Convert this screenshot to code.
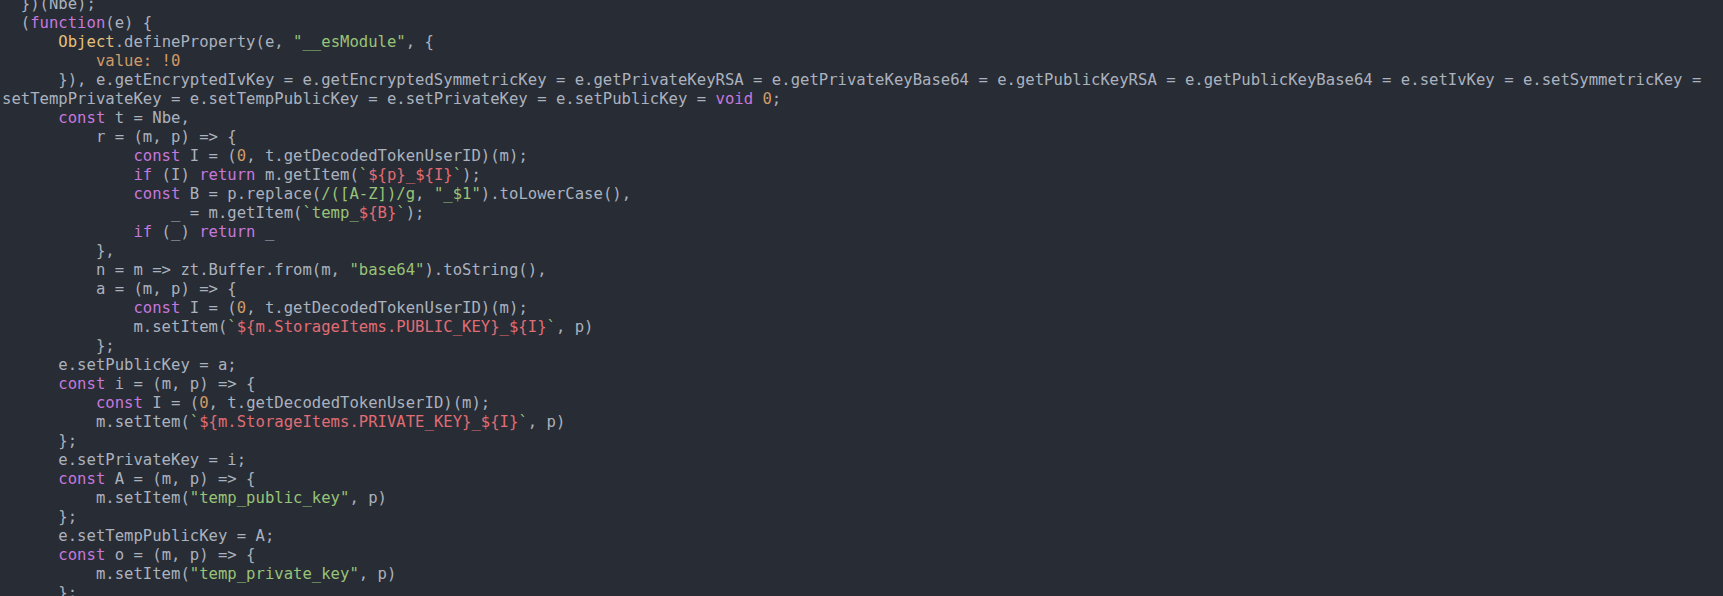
import React from 'react';

type Seg = string | [string, string];

const K = 'text-[#c678dd]';
const S = 'text-[#98c379]';
const N = 'text-[#d19a66]';
const O = 'text-[#e5c07b]';
const T = 'text-[#e06c75]';

// [indent, segments]
const lines: [number, Seg[]][] = [
  [2, ['})(Nbe);']],
  [2, ['(', [K, 'function'], '(e) {']],
  [6, [[O, 'Object'], '.defineProperty(e, ', [S, '"__esModule"'], ', {']],
  [10, [[N, 'value: !0']]],
  [
    6,
    [
      '}), e.getEncryptedIvKey = e.getEncryptedSymmetricKey = e.getPrivateKeyRSA = e.getPrivateKeyBase64 = e.getPublicKeyRSA = e.getPublicKeyBase64 = e.setIvKey = e.setSymmetricKey =',
    ],
  ],
  [0, ['setTempPrivateKey = e.setTempPublicKey = e.setPrivateKey = e.setPublicKey = ', [K, 'void'], ' ', [N, '0'], ';']],
  [6, [[K, 'const'], ' t = Nbe,']],
  [10, ['r = (m, p) => {']],
  [14, [[K, 'const'], ' I = (', [N, '0'], ', t.getDecodedTokenUserID)(m);']],
  [14, [[K, 'if'], ' (I) ', [K, 'return'], ' m.getItem(', [S, '`'], [T, '${p}_${I}'], [S, '`'], ');']],
  [14, [[K, 'const'], ' B = p.replace(', [S, '/([A-Z])/g'], ', ', [S, '"_$1"'], ').toLowerCase(),']],
  [18, ['_ = m.getItem(', [S, '`temp_'], [T, '${B}'], [S, '`'], ');']],
  [14, [[K, 'if'], ' (_) ', [K, 'return'], ' _']],
  [10, ['},']],
  [10, ['n = m => zt.Buffer.from(m, ', [S, '"base64"'], ').toString(),']],
  [10, ['a = (m, p) => {']],
  [14, [[K, 'const'], ' I = (', [N, '0'], ', t.getDecodedTokenUserID)(m);']],
  [14, ['m.setItem(', [S, '`'], [T, '${m.StorageItems.PUBLIC_KEY}_${I}'], [S, '`'], ', p)']],
  [10, ['};']],
  [6, ['e.setPublicKey = a;']],
  [6, [[K, 'const'], ' i = (m, p) => {']],
  [10, [[K, 'const'], ' I = (', [N, '0'], ', t.getDecodedTokenUserID)(m);']],
  [10, ['m.setItem(', [S, '`'], [T, '${m.StorageItems.PRIVATE_KEY}_${I}'], [S, '`'], ', p)']],
  [6, ['};']],
  [6, ['e.setPrivateKey = i;']],
  [6, [[K, 'const'], ' A = (m, p) => {']],
  [10, ['m.setItem(', [S, '"temp_public_key"'], ', p)']],
  [6, ['};']],
  [6, ['e.setTempPublicKey = A;']],
  [6, [[K, 'const'], ' o = (m, p) => {']],
  [10, ['m.setItem(', [S, '"temp_private_key"'], ', p)']],
  [6, ['};']],
];

const App = () => {
  return (
    <div className="w-full h-[596px] overflow-hidden bg-[#282c34]">
      <pre
        className="-mt-[5px] pl-[2px] text-[15.6px] leading-[19px] text-[#abb2bf] whitespace-pre"
        style={{ fontFamily: '"DejaVu Sans Mono", "Liberation Mono", monospace' }}
      >
        {lines.map(([indent, segs], i) => (
          <div key={i}>
            {' '.repeat(indent)}
            {segs.map((s, j) =>
              typeof s === 'string' ? (
                <span key={j}>{s}</span>
              ) : (
                <span key={j} className={s[0]}>
                  {s[1]}
                </span>
              )
            )}
          </div>
        ))}
      </pre>
    </div>
  );
};

export default App;
